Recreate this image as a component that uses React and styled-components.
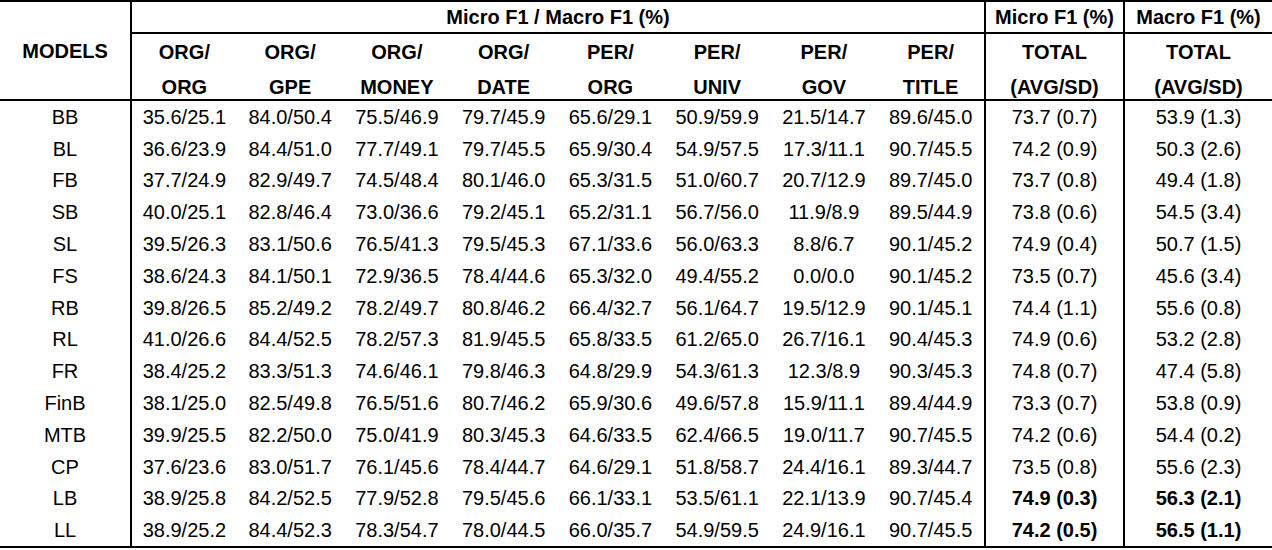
import React from 'react';
import styled, { createGlobalStyle } from 'styled-components';

const GlobalStyle = createGlobalStyle`
  html, body {
    margin: 0;
    padding: 0;
    background: #ffffff;
  }
  body {
    font-family: "Liberation Sans", Arial, sans-serif;
    color: #000;
  }
`;

const Table = styled.table`
  border-collapse: separate;
  border-spacing: 0;
  table-layout: fixed;
  width: 1272px;
  border-top: 2px solid #000;
  border-bottom: 2px solid #000;
  font-size: 20px;
`;

const HeadCell = styled.th`
  padding: ${p => (p.$stack ? '6px 0 0' : '0')};
  text-align: center;
  font-weight: 700;
  vertical-align: ${p => (p.$stack ? 'top' : 'middle')};
  white-space: nowrap;
  line-height: 24px;
  border-left: ${p => (p.$sep ? '2px solid #000' : 'none')};
  border-bottom: ${p => (p.$under ? '2px solid #000' : 'none')};
`;

const Line = styled.span`
  display: block;
  line-height: 24px;
  margin-top: ${p => (p.$second ? '11px' : '0')};
`;

const TopRow = styled.tr`
  height: 32px;
`;

const SubRow = styled.tr`
  height: 67px;
`;

const DataRow = styled.tr`
  height: 31.8px;
`;

const Cell = styled.td`
  padding: 0;
  text-align: center;
  vertical-align: middle;
  white-space: nowrap;
  line-height: 24px;
  font-weight: ${p => (p.$bold ? 700 : 400)};
  border-left: ${p => (p.$sep ? '2px solid #000' : 'none')};
`;

const pairs = [
  ['ORG', 'ORG'], ['ORG', 'GPE'], ['ORG', 'MONEY'], ['ORG', 'DATE'],
  ['PER', 'ORG'], ['PER', 'UNIV'], ['PER', 'GOV'], ['PER', 'TITLE'],
];

const rows = [
  ['BB', '35.6/25.1 84.0/50.4 75.5/46.9 79.7/45.9 65.6/29.1 50.9/59.9 21.5/14.7 89.6/45.0', '73.7 (0.7)', '53.9 (1.3)'],
  ['BL', '36.6/23.9 84.4/51.0 77.7/49.1 79.7/45.5 65.9/30.4 54.9/57.5 17.3/11.1 90.7/45.5', '74.2 (0.9)', '50.3 (2.6)'],
  ['FB', '37.7/24.9 82.9/49.7 74.5/48.4 80.1/46.0 65.3/31.5 51.0/60.7 20.7/12.9 89.7/45.0', '73.7 (0.8)', '49.4 (1.8)'],
  ['SB', '40.0/25.1 82.8/46.4 73.0/36.6 79.2/45.1 65.2/31.1 56.7/56.0 11.9/8.9 89.5/44.9', '73.8 (0.6)', '54.5 (3.4)'],
  ['SL', '39.5/26.3 83.1/50.6 76.5/41.3 79.5/45.3 67.1/33.6 56.0/63.3 8.8/6.7 90.1/45.2', '74.9 (0.4)', '50.7 (1.5)'],
  ['FS', '38.6/24.3 84.1/50.1 72.9/36.5 78.4/44.6 65.3/32.0 49.4/55.2 0.0/0.0 90.1/45.2', '73.5 (0.7)', '45.6 (3.4)'],
  ['RB', '39.8/26.5 85.2/49.2 78.2/49.7 80.8/46.2 66.4/32.7 56.1/64.7 19.5/12.9 90.1/45.1', '74.4 (1.1)', '55.6 (0.8)'],
  ['RL', '41.0/26.6 84.4/52.5 78.2/57.3 81.9/45.5 65.8/33.5 61.2/65.0 26.7/16.1 90.4/45.3', '74.9 (0.6)', '53.2 (2.8)'],
  ['FR', '38.4/25.2 83.3/51.3 74.6/46.1 79.8/46.3 64.8/29.9 54.3/61.3 12.3/8.9 90.3/45.3', '74.8 (0.7)', '47.4 (5.8)'],
  ['FinB', '38.1/25.0 82.5/49.8 76.5/51.6 80.7/46.2 65.9/30.6 49.6/57.8 15.9/11.1 89.4/44.9', '73.3 (0.7)', '53.8 (0.9)'],
  ['MTB', '39.9/25.5 82.2/50.0 75.0/41.9 80.3/45.3 64.6/33.5 62.4/66.5 19.0/11.7 90.7/45.5', '74.2 (0.6)', '54.4 (0.2)'],
  ['CP', '37.6/23.6 83.0/51.7 76.1/45.6 78.4/44.7 64.6/29.1 51.8/58.7 24.4/16.1 89.3/44.7', '73.5 (0.8)', '55.6 (2.3)'],
  ['LB', '38.9/25.8 84.2/52.5 77.9/52.8 79.5/45.6 66.1/33.1 53.5/61.1 22.1/13.9 90.7/45.4', '74.9 (0.3)', '56.3 (2.1)', true],
  ['LL', '38.9/25.2 84.4/52.3 78.3/54.7 78.0/44.5 66.0/35.7 54.9/59.5 24.9/16.1 90.7/45.5', '74.2 (0.5)', '56.5 (1.1)', true],
];

export default function App() {
  return (
    <>
      <GlobalStyle />
      <Table>
        <colgroup>
          <col style={{ width: 130 }} />
          {pairs.map((_, i) => <col key={i} style={{ width: 106.75 }} />)}
          <col style={{ width: 139 }} />
          <col style={{ width: 149 }} />
        </colgroup>
        <thead>
          <TopRow>
            <HeadCell rowSpan={2} $under>MODELS</HeadCell>
            <HeadCell colSpan={8} $sep $under>Micro F1 / Macro F1 (%)</HeadCell>
            <HeadCell $sep $under>Micro F1 (%)</HeadCell>
            <HeadCell $sep $under>Macro F1 (%)</HeadCell>
          </TopRow>
          <SubRow>
            {pairs.map(([a, b], i) => (
              <HeadCell key={i} $sep={i === 0} $under $stack>
                <Line>{a}/</Line>
                <Line $second>{b}</Line>
              </HeadCell>
            ))}
            <HeadCell $sep $under $stack>
              <Line>TOTAL</Line>
              <Line $second>(AVG/SD)</Line>
            </HeadCell>
            <HeadCell $sep $under $stack>
              <Line>TOTAL</Line>
              <Line $second>(AVG/SD)</Line>
            </HeadCell>
          </SubRow>
        </thead>
        <tbody>
          {rows.map(([name, vals, micro, macro, best]) => (
            <DataRow key={name}>
              <Cell>{name}</Cell>
              {vals.split(' ').map((v, i) => (
                <Cell key={i} $sep={i === 0}>{v}</Cell>
              ))}
              <Cell $sep $bold={best}>{micro}</Cell>
              <Cell $sep $bold={best}>{macro}</Cell>
            </DataRow>
          ))}
        </tbody>
      </Table>
    </>
  );
}
